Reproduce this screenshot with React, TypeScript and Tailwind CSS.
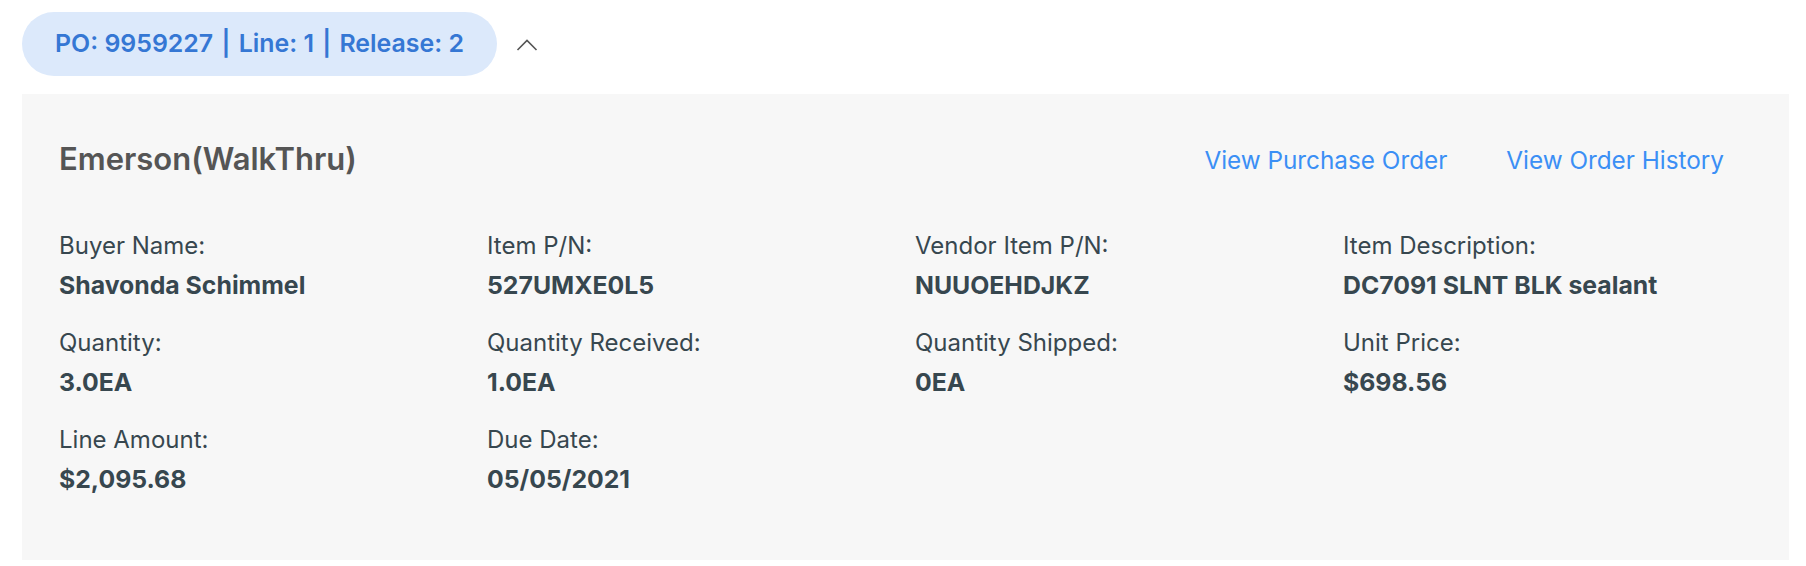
import { FC } from "react";

type Field = { label: string; value: string };

const fields: Field[] = [
  { label: "Buyer Name:", value: "Shavonda Schimmel" },
  { label: "Item P/N:", value: "527UMXE0L5" },
  { label: "Vendor Item P/N:", value: "NUUOEHDJKZ" },
  { label: "Item Description:", value: "DC7091 SLNT BLK sealant" },
  { label: "Quantity:", value: "3.0EA" },
  { label: "Quantity Received:", value: "1.0EA" },
  { label: "Quantity Shipped:", value: "0EA" },
  { label: "Unit Price:", value: "$698.56" },
  { label: "Line Amount:", value: "$2,095.68" },
  { label: "Due Date:", value: "05/05/2021" },
];

const ChevronUp: FC = () => (
  <svg width="22" height="13" viewBox="0 0 22 13" fill="none">
    <path d="M1.5 12L11 2.5L20.5 12" stroke="#555555" strokeWidth="1.6" />
  </svg>
);

const App: FC = () => {
  return (
    <div
      className="w-full h-[566px] bg-white pt-[12px] pl-[22px] pr-[17px]"
      style={{ fontFamily: "Inter, 'Noto Sans', sans-serif" }}
    >
      <div className="flex items-center gap-[19px]">
        <div className="h-[64px] px-[33px] rounded-full bg-[#dce9fb] text-[#3577d4] text-[24.9px] font-semibold flex items-center whitespace-pre">
          PO: 9959227 <span className="mx-[2px]">|</span> Line: 1{" "}
          <span className="mx-[2px]">|</span> Release: 2
        </div>
        <ChevronUp />
      </div>

      <div className="mt-[18px] h-[466px] bg-[#f7f7f7] pl-[37px] pr-[65px] pt-[45px]">
        <div className="flex items-center justify-between">
          <h2 className="text-[31px] font-semibold text-[#555555] leading-[38px]">
            Emerson(WalkThru)
          </h2>
          <div className="flex items-center gap-[59px] text-[24.3px] text-[#3b8ff5] mt-[3px]">
            <a className="cursor-pointer">View Purchase Order</a>
            <a className="cursor-pointer">View Order History</a>
          </div>
        </div>

        <div className="grid grid-cols-[repeat(4,428px)] gap-y-[30px] mt-[54px] text-[#37474f]">
          {fields.map((f) => (
            <div key={f.label} className="flex flex-col gap-[11px]">
              <span className="text-[24px] leading-[28px]">{f.label}</span>
              <span className="text-[24.8px] leading-[28px] font-bold">
                {f.value}
              </span>
            </div>
          ))}
        </div>
      </div>
    </div>
  );
};

export default App;
